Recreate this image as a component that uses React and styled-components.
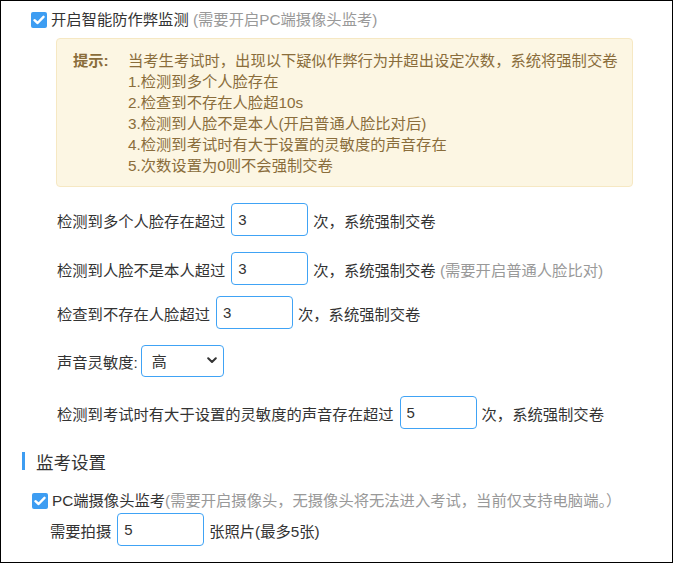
import React from "react";
import styled, { createGlobalStyle } from "styled-components";

const Global = createGlobalStyle`
  html, body { margin: 0; padding: 0; background: #fff; }
  body { font-family: "Liberation Sans", "Noto Sans CJK SC", sans-serif; color: #333; }
  * { box-sizing: border-box; }
`;

const Frame = styled.div`
  width: 673px;
  height: 563px;
  border: 1px solid #000;
  overflow: hidden;
  padding: 8px 0 0 0;
  font-size: 15.3px;
`;

const CheckRow = styled.label`
  display: flex;
  align-items: center;
  height: 21px;
  line-height: 21px;
  padding-left: ${(p) => p.$indent}px;
  margin-top: ${(p) => p.$mt || 0}px;
  white-space: nowrap;
`;

const Box = styled.span`
  width: 16px;
  height: 16px;
  border-radius: 2px;
  background: #3d9df2;
  display: inline-flex;
  align-items: center;
  justify-content: center;
  margin-right: 4px;
  flex: none;
`;

const Muted = styled.span`
  color: #999;
`;

const Tip = styled.div`
  margin: 8px 39px 0 55px;
  background: #fcf6e3;
  border: 1px solid #f6e8c3;
  border-radius: 4px;
  padding: 11px 16px 10px 16px;
  color: #8a6d3b;
  display: flex;
  line-height: 21px;
  white-space: nowrap;
`;

const TipLabel = styled.div`
  font-weight: bold;
  width: 55px;
  flex: none;
`;

const TipLines = styled.div`
  display: flex;
  flex-direction: column;
`;

const Row = styled.div`
  display: flex;
  align-items: center;
  padding-left: ${(p) => p.$indent || 56}px;
  margin-top: ${(p) => p.$mt}px;
  white-space: nowrap;
`;

const Field = styled.input`
  width: ${(p) => p.$w}px;
  height: 33px;
  border: 1px solid #40a3f5;
  border-radius: 4px;
  padding: 0 6px;
  font: inherit;
  font-size: 15px;
  color: #333;
  margin: 0 5px 0 6px;
  outline: none;
  background: #fff;
`;

const SelectWrap = styled.div`
  position: relative;
  margin-left: 3px;
`;

const Select = styled.select`
  appearance: none;
  width: 83px;
  height: 32px;
  border: 1px solid #40a3f5;
  border-radius: 4px;
  padding: 0 10px;
  font: inherit;
  font-size: 15px;
  color: #333;
  background: #fff;
  outline: none;
`;

const Chevron = styled.svg`
  position: absolute;
  right: 7px;
  top: 12px;
  pointer-events: none;
`;

const Heading = styled.div`
  display: flex;
  align-items: center;
  margin-top: 20px;
  padding-left: 21px;
  height: 24px;
  font-size: 17.5px;
  color: #333;
`;

const Bar = styled.span`
  width: 3px;
  height: 18px;
  background: #3d9df2;
  margin-right: 11px;
`;

const Check = () => (
  <Box>
    <svg width="12" height="10" viewBox="0 0 12 10">
      <path d="M1.5 5.2 L4.6 8 L10.5 1.8" fill="none" stroke="#fff" strokeWidth="2.4" strokeLinecap="round" strokeLinejoin="round" />
    </svg>
  </Box>
);

export default function App() {
  return (
    <>
      <Global />
      <Frame>
        <CheckRow $indent={30}>
          <Check />
          开启智能防作弊监测 <Muted>&nbsp;(需要开启PC端摄像头监考)</Muted>
        </CheckRow>
        <Tip>
          <TipLabel>提示:</TipLabel>
          <TipLines>
            <span>当考生考试时，出现以下疑似作弊行为并超出设定次数，系统将强制交卷</span>
            <span>1.检测到多个人脸存在</span>
            <span>2.检查到不存在人脸超10s</span>
            <span>3.检测到人脸不是本人(开启普通人脸比对后)</span>
            <span>4.检测到考试时有大于设置的灵敏度的声音存在</span>
            <span>5.次数设置为0则不会强制交卷</span>
          </TipLines>
        </Tip>
        <Row $mt={16}>
          检测到多个人脸存在超过<Field $w={77} defaultValue="3" />次，系统强制交卷
        </Row>
        <Row $mt={16}>
          检测到人脸不是本人超过<Field $w={77} defaultValue="3" />次，系统强制交卷<Muted>&nbsp;(需要开启普通人脸比对)</Muted>
        </Row>
        <Row $mt={11}>
          检查到不存在人脸超过<Field $w={77} defaultValue="3" />次，系统强制交卷
        </Row>
        <Row $mt={16}>
          声音灵敏度:
          <SelectWrap>
            <Select defaultValue="高">
              <option>高</option>
              <option>中</option>
              <option>低</option>
            </Select>
            <Chevron width="10" height="7" viewBox="0 0 10 7">
              <path d="M1.2 1.2 L5 5 L8.8 1.2" fill="none" stroke="#333" strokeWidth="2" strokeLinecap="round" strokeLinejoin="round" />
            </Chevron>
          </SelectWrap>
        </Row>
        <Row $mt={19}>
          检测到考试时有大于设置的灵敏度的声音存在超过<Field $w={77} defaultValue="5" />次，系统强制交卷
        </Row>
        <Heading>
          <Bar />
          监考设置
        </Heading>
        <CheckRow $indent={31} $mt={17}>
          <Check />
          PC端摄像头监考<Muted>(需要开启摄像头，无摄像头将无法进入考试，当前仅支持电脑端。）</Muted>
        </CheckRow>
        <Row $mt={2} $indent={49}>
          需要拍摄<Field $w={87} defaultValue="5" />张照片(最多5张)
        </Row>
      </Frame>
    </>
  );
}
